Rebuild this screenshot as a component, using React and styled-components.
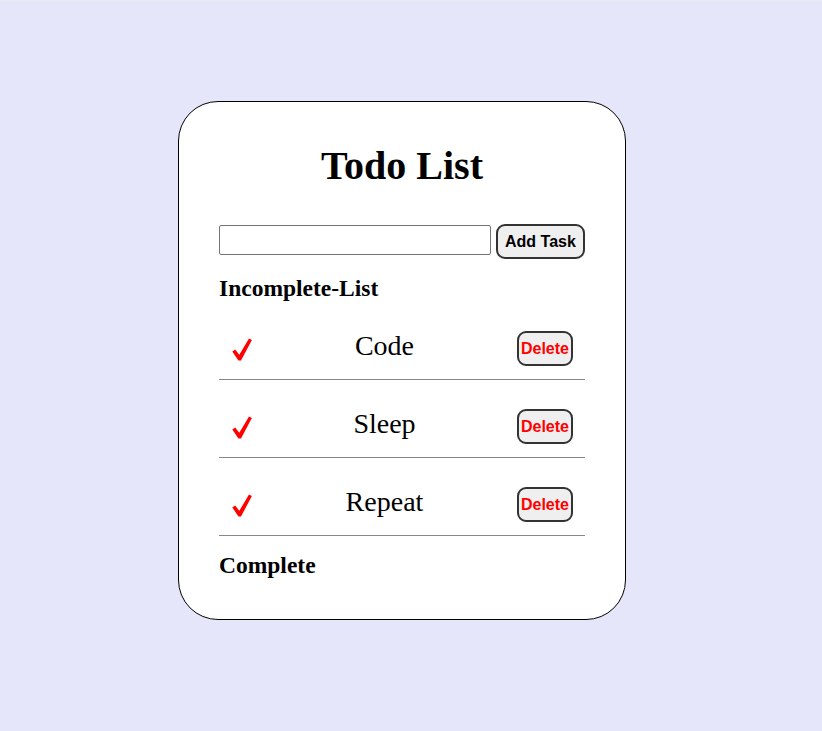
import React, { useState } from "react";
import styled, { createGlobalStyle } from "styled-components";

const GlobalStyle = createGlobalStyle`
  html, body {
    margin: 0;
    padding: 0;
    background: #e6e6fa;
  }
`;

// 바깥 배경
const Page = styled.div`
  min-height: 100vh;
  box-sizing: border-box;
  border-top: 1px solid #e9e9ee;
  padding: 100px 18px 0 0;
  display: flex;
  justify-content: center;
  align-items: flex-start;
  font-family: "Liberation Serif", "Times New Roman", serif;
`;

const Card = styled.div`
  width: 366px;
  padding: 41px 40px 40px;
  background: #fff;
  border: 1px solid #000;
  border-radius: 40px;
`;

const Title = styled.h1`
  margin: 0 0 35px;
  font-size: 40px;
  line-height: 46px;
  font-weight: bold;
  text-align: center;
`;

const InputRow = styled.div`
  display: flex;
  align-items: flex-start;
  gap: 5px;
`;

const TaskInput = styled.input`
  box-sizing: border-box;
  width: 272px;
  height: 30px;
  margin: 1px 0 0;
  padding: 2px 4px;
  border: 1px solid #767676;
  border-radius: 2px;
  font-size: 16px;
  outline: none;
`;

const Button = styled.button`
  box-sizing: border-box;
  height: 35px;
  padding: 0 ${(p) => (p.$tight ? "2px" : "7px")};
  border: 2px solid #333;
  border-radius: 9px;
  background: #efefef;
  color: ${(p) => p.$color || "#000"};
  font-family: "Liberation Sans", Arial, sans-serif;
  font-size: 16px;
  font-weight: bold;
  cursor: pointer;
`;

const SectionTitle = styled.h2`
  margin: 15px 0 0;
  font-size: 23.5px;
  line-height: 28px;
  font-weight: bold;
`;

const List = styled.ul`
  list-style: none;
  margin: 0;
  padding: 0;
`;

const Row = styled.li`
  display: flex;
  align-items: center;
  justify-content: space-between;
  padding: 29px 12px 13px 13px;
  border-bottom: 1px solid #888;
`;

const Check = styled.span`
  display: flex;
  width: 20px;
  height: 23px;
  margin-top: 1px;
  cursor: pointer;
`;

const TaskText = styled.span`
  flex: 1;
  text-align: center;
  font-size: 28px;
  line-height: 32px;
  margin-top: -6px;
`;

const CheckIcon = () => (
  <svg width="20" height="23" viewBox="0 0 20 23">
    <path
      d="M0.3 13.4 L3.2 11.6 L7.3 16.8 L17 0.4 L19.9 1.9 L9 22.6 L6.4 22.6 Z"
      fill="#ff0000"
    />
  </svg>
);

export default function App() {
  const [text, setText] = useState("");
  const [tasks, setTasks] = useState(["Code", "Sleep", "Repeat"]);
  const [done, setDone] = useState([]);

  const addTask = () => {
    if (!text.trim()) return;
    setTasks([...tasks, text.trim()]);
    setText("");
  };

  // 완료 처리
  const complete = (i) => {
    setDone([...done, tasks[i]]);
    setTasks(tasks.filter((_, idx) => idx !== i));
  };

  const remove = (i) => setTasks(tasks.filter((_, idx) => idx !== i));

  return (
    <>
      <GlobalStyle />
      <Page>
        <Card>
          <Title>Todo List</Title>
          <InputRow>
            <TaskInput value={text} onChange={(e) => setText(e.target.value)} />
            <Button onClick={addTask}>Add Task</Button>
          </InputRow>
          <SectionTitle>Incomplete-List</SectionTitle>
          <List>
            {tasks.map((t, i) => (
              <Row key={t + i}>
                <Check onClick={() => complete(i)}>
                  <CheckIcon />
                </Check>
                <TaskText>{t}</TaskText>
                <Button $tight $color="#ff0000" onClick={() => remove(i)}>
                  Delete
                </Button>
              </Row>
            ))}
          </List>
          <SectionTitle>Complete</SectionTitle>
          {done.length > 0 && (
            <List>
              {done.map((t, i) => (
                <Row key={t + i}>
                  <TaskText>{t}</TaskText>
                </Row>
              ))}
            </List>
          )}
        </Card>
      </Page>
    </>
  );
}
